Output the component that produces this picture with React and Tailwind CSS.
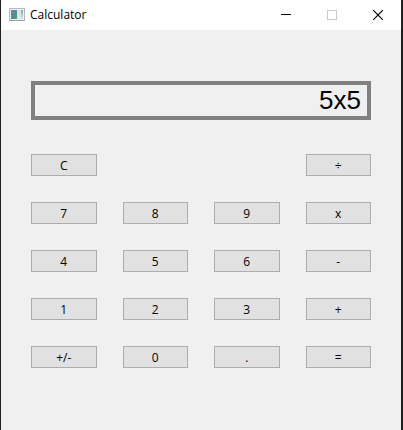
import { useState } from "react";

// null keeps a cell of the grid empty
const KEYS = [
  "C", null, null, "÷",
  "7", "8", "9", "x",
  "4", "5", "6", "-",
  "1", "2", "3", "+",
  "+/-", "0", ".", "=",
];

const EXPRESSION = /^(-?[\d.]+)([÷x+-])(-?[\d.]+)$/;

function calculate(text) {
  const match = text.match(EXPRESSION);
  if (!match) return text;

  const a = parseFloat(match[1]);
  const b = parseFloat(match[3]);
  switch (match[2]) {
    case "÷":
      return String(a / b);
    case "x":
      return String(a * b);
    case "-":
      return String(a - b);
    default:
      return String(a + b);
  }
}

function AppIcon() {
  return (
    <svg width="16" height="14" viewBox="0 0 16 14" aria-hidden="true">
      <defs>
        <linearGradient id="pane" x1="0" y1="0" x2="1" y2="1">
          <stop offset="0" stopColor="#5b86a8" />
          <stop offset="1" stopColor="#4a9a78" />
        </linearGradient>
        <linearGradient id="side" x1="0" y1="0" x2="0" y2="1">
          <stop offset="0" stopColor="#7fa3bd" />
          <stop offset="1" stopColor="#dfe8e4" />
        </linearGradient>
      </defs>
      <rect x="0.5" y="0.5" width="15" height="12" fill="#eef0f1" stroke="#b4b8be" />
      <rect x="0" y="12" width="16" height="1" fill="#9a9ea5" />
      <rect x="2" y="2" width="6" height="9" fill="url(#pane)" />
      <rect x="8" y="2" width="4" height="9" fill="#dde4e5" />
      <rect x="12" y="2" width="2" height="9" fill="url(#side)" />
    </svg>
  );
}

function TitleBar() {
  return (
    <header className="flex h-[30px] items-center bg-white pl-2">
      <AppIcon />
      <h1 className="flex-1 pl-[5px] text-[12px] leading-4">Calculator</h1>
      <button aria-label="Minimize" className="flex h-full w-[46px] items-center justify-center">
        <svg width="10" height="10" viewBox="0 0 10 10" shapeRendering="crispEdges">
          <path d="M0 4.5H10" stroke="#000" />
        </svg>
      </button>
      <button aria-label="Maximize" disabled className="flex h-full w-[46px] items-center justify-center">
        <svg width="10" height="10" viewBox="0 0 10 10" shapeRendering="crispEdges">
          <rect x="0.5" y="0.5" width="9" height="9" fill="none" stroke="#ccc" />
        </svg>
      </button>
      <button aria-label="Close" className="flex h-full w-[46px] items-center justify-center">
        <svg width="10" height="10" viewBox="0 0 10 10">
          <path d="M0 0L10 10M10 0L0 10" stroke="#000" strokeWidth="1.2" />
        </svg>
      </button>
    </header>
  );
}

export default function App() {
  const [display, setDisplay] = useState("5x5");

  const handlePress = (key) => {
    if (key === "C") {
      setDisplay("");
    } else if (key === "=") {
      setDisplay(calculate(display));
    } else if (key === "+/-") {
      setDisplay(display.startsWith("-") ? display.slice(1) : "-" + display);
    } else {
      setDisplay(display + key);
    }
  };

  return (
    <div className="min-h-screen border-r-2 border-l border-[#202020] bg-[#f0f0f0] font-['Open_Sans',sans-serif] text-black">
      <TitleBar />
      <main className="px-[30px] pt-[51px] pb-[60px]">
        <input
          aria-label="Display"
          readOnly
          value={display}
          className="block h-[39px] w-full border-4 border-[#808080] bg-transparent px-[6px] text-right font-['Liberation_Sans',sans-serif] text-[26px] leading-[31px] outline-none"
        />
        <div className="mt-[34px] grid grid-cols-4 gap-[26px]">
          {KEYS.map((key, i) =>
            key ? (
              <button
                key={key}
                onClick={() => handlePress(key)}
                className="h-[22px] border border-[#adadad] bg-[#e1e1e1] pt-[2px] text-[12px] leading-[18px] hover:border-[#0078d7] hover:bg-[#e5f1fb]"
              >
                {key}
              </button>
            ) : (
              <span key={i} />
            )
          )}
        </div>
      </main>
    </div>
  );
}
